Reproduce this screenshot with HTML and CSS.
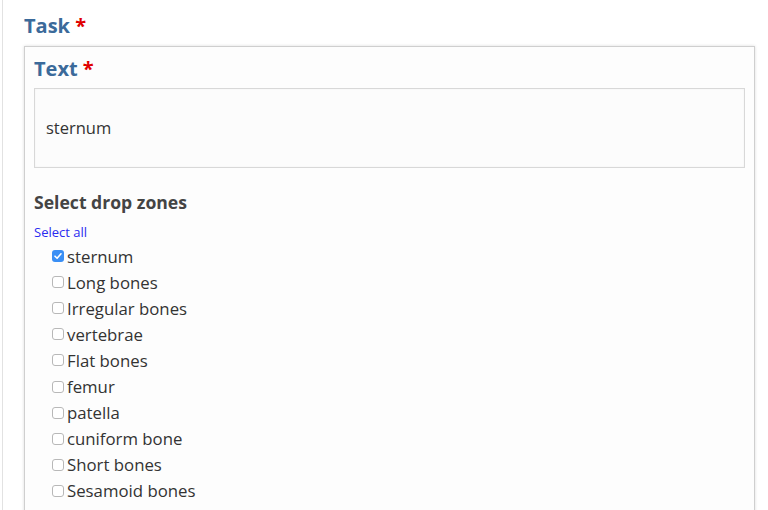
FILE: index.html
```html
<!DOCTYPE html>
<html>
<head>
<meta charset="utf-8">
<link rel="stylesheet" href="styles.css">
</head>
<body>
<div class="page">
  <h2 class="label">Task <span class="req">*</span></h2>
  <div class="task-box">
    <h2 class="label inner">Text <span class="req">*</span></h2>
    <div class="text-input">sternum</div>
    <h3 class="zones-title">Select drop zones</h3>
    <a class="select-all" href="#">Select all</a>
    <ul class="zones">
      <li><span class="cb checked"><svg viewBox="0 0 12 12" width="12" height="12"><path d="M3 6.2 L5.1 8.3 L9 3.8" fill="none" stroke="#fff" stroke-width="1.6" stroke-linecap="round" stroke-linejoin="round"/></svg></span>sternum</li>
      <li><span class="cb"></span>Long bones</li>
      <li><span class="cb"></span>Irregular bones</li>
      <li><span class="cb"></span>vertebrae</li>
      <li><span class="cb"></span>Flat bones</li>
      <li><span class="cb"></span>femur</li>
      <li><span class="cb"></span>patella</li>
      <li><span class="cb"></span>cuniform bone</li>
      <li><span class="cb"></span>Short bones</li>
      <li><span class="cb"></span>Sesamoid bones</li>
    </ul>
  </div>
</div>
</body>
</html>
```
FILE: styles.css
```css
html, body {
  margin: 0;
  padding: 0;
  background: #fff;
  height: 100%;
  overflow: hidden;
}
body {
  font-family: "Open Sans", "Noto Sans", sans-serif;
  color: #333;
}
.page {
  margin-left: 2px;
  border-left: 1px solid #e2e2e2;
  padding: 12px 0 0 21px;
  min-height: 600px;
}
.label {
  margin: 0;
  font-size: 20px;
  font-weight: 700;
  line-height: 28px;
  color: #3b6a9a;
}
.req {
  color: #e00000;
}
.task-box {
  margin-top: 6px;
  width: 711px;
  border: 1px solid #cfcfcf;
  box-shadow: 0 0 3px rgba(0, 0, 0, 0.14);
  background: #fdfdfd;
  padding: 8px 9px 0 9px;
  min-height: 500px;
}
.text-input {
  margin-top: 5px;
  height: 78px;
  border: 1px solid #d8d8d8;
  box-shadow: inset 0 0 2px rgba(0, 0, 0, 0.06);
  background: #fcfcfc;
  padding: 0 11px;
  font-size: 16.5px;
  line-height: 78px;
  color: #333;
}
.zones-title {
  margin: 22px 0 0 0;
  font-size: 17.6px;
  font-weight: 700;
  line-height: 24px;
  color: #444;
}
.select-all {
  display: block;
  margin-top: 9px;
  font-size: 13px;
  line-height: 18px;
  color: #2a2af0;
  text-decoration: none;
}
.zones {
  list-style: none;
  margin: 2px 0 0 0;
  padding: 0 0 0 18px;
}
.zones li {
  display: flex;
  align-items: center;
  height: 26.1px;
  font-size: 16.8px;
  color: #333;
}
.cb {
  box-sizing: border-box;
  width: 12px;
  height: 12px;
  margin-right: 3px;
  border: 1px solid #b8b8b8;
  border-radius: 3px;
  background: #fff;
  display: flex;
  align-items: center;
  justify-content: center;
  flex: none;
}
.cb.checked {
  border: none;
  background: #3a8ff5;
}
.cb svg {
  display: block;
}
```
